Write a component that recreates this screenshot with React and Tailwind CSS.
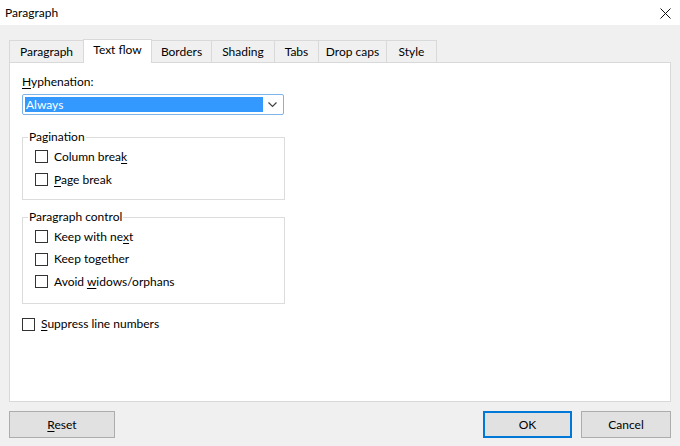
import React from 'react';

const TABS = [
  { label: 'Paragraph', w: 75 },
  { label: 'Text flow', w: 69, active: true },
  { label: 'Borders', w: 61 },
  { label: 'Shading', w: 64 },
  { label: 'Tabs', w: 45 },
  { label: 'Drop caps', w: 69 },
  { label: 'Style', w: 51 },
];

const Box = () => <span className="w-[13px] h-[13px] border border-[#333333] bg-white shrink-0" />;

// label with one underlined mnemonic letter
const Label = ({ pre, u, post }) => (
  <span className="whitespace-nowrap">
    {pre}<span className="underline underline-offset-2">{u}</span>{post}
  </span>
);

const Check = ({ h, children, pl = 'pl-[12px]' }) => (
  <div className={`flex items-center gap-[6px] ${h} ${pl}`}>
    <Box />
    {children}
  </div>
);

const Group = ({ title, className, children }) => (
  <fieldset className={`border border-[#dcdcdc] w-[263px] ${className}`}>
    <legend className="ml-[5px] px-[1px] leading-[16px]">{title}</legend>
    {children}
  </fieldset>
);

export default function App() {
  return (
    <div className="w-[680px] h-[446px] bg-[#f0f0f0] flex flex-col text-[12px] text-black overflow-hidden"
      style={{ fontFamily: 'Lato, "Noto Sans", "Liberation Sans", sans-serif' }}>
      {/* title bar */}
      <div className="h-[25px] bg-white flex items-center justify-between pl-[5px] pr-[9px] shrink-0">
        <span>Paragraph</span>
        <svg width="11" height="11" viewBox="0 0 11 11" className="mt-[1px]">
          <path d="M0.5 0.5 L10.5 10.5 M10.5 0.5 L0.5 10.5" stroke="#111" strokeWidth="1" />
        </svg>
      </div>

      <div className="flex flex-col px-[9px] pt-[14px]">
        {/* tabs */}
        <div className="flex items-end h-[23px] relative z-10">
          {TABS.map((t, i) => (
            <div key={t.label}
              className={`flex items-center justify-center border border-[#d9d9d9] ${i > 0 ? '-ml-px' : ''} ${
                t.active ? 'h-[24px] bg-white border-b-0 -mb-px relative z-10' : 'h-[22px] bg-[#f0f0f0] border-b-0'
              }`}
              style={{ width: t.w }}>
              <span className={t.active ? 'pb-[3px]' : 'pt-[1px]'}>{t.label}</span>
            </div>
          ))}
        </div>

        {/* panel */}
        <div className="h-[340px] bg-white border border-[#d9d9d9] flex flex-col pl-[12px] pt-[10px]">
          <Label u="H" post="yphenation:" />
          <div className="mt-[3px] w-[262px] h-[21px] border border-[#7eb4ea] rounded-[2px] flex items-center pl-[2px] pr-[6px]">
            <div className="w-[238px] h-[15px] bg-[#3399ff] text-white flex items-center pl-[1px] leading-[15px]">Always</div>
            <div className="flex-1 flex justify-end">
              <svg width="9" height="6" viewBox="0 0 9 6">
                <path d="M0.5 0.5 L4.5 4.5 L8.5 0.5" stroke="#444" strokeWidth="1.2" fill="none" />
              </svg>
            </div>
          </div>

          <Group title="Pagination" className="mt-[14px] pb-[8px]">
            <Check h="h-[23px]"><Label pre="Column brea" u="k" /></Check>
            <Check h="h-[23px]"><Label u="P" post="age break" /></Check>
          </Group>

          <Group title="Paragraph control" className="mt-[9px] pb-[10px]">
            <Check h="h-[23px]"><Label pre="Keep with ne" u="x" post="t" /></Check>
            <Check h="h-[22px]"><span>Keep together</span></Check>
            <Check h="h-[23px]"><Label pre="Avoid " u="w" post="idows/orphans" /></Check>
          </Group>

          <Check h="h-[22px] mt-[9px]" pl="pl-0"><Label u="S" post="uppress line numbers" /></Check>
        </div>

        {/* buttons */}
        <div className="flex items-center mt-[9px]">
          <button className="w-[106px] h-[27px] bg-[#e1e1e1] border border-[#adadad] flex items-center justify-center">
            <Label u="R" post="eset" />
          </button>
          <div className="flex-1" />
          <button className="w-[89px] h-[27px] bg-[#e1e1e1] border-2 border-[#0078d7] flex items-center justify-center">OK</button>
          <button className="ml-[9px] w-[90px] h-[27px] bg-[#e1e1e1] border border-[#adadad] flex items-center justify-center">Cancel</button>
        </div>
      </div>
    </div>
  );
}
